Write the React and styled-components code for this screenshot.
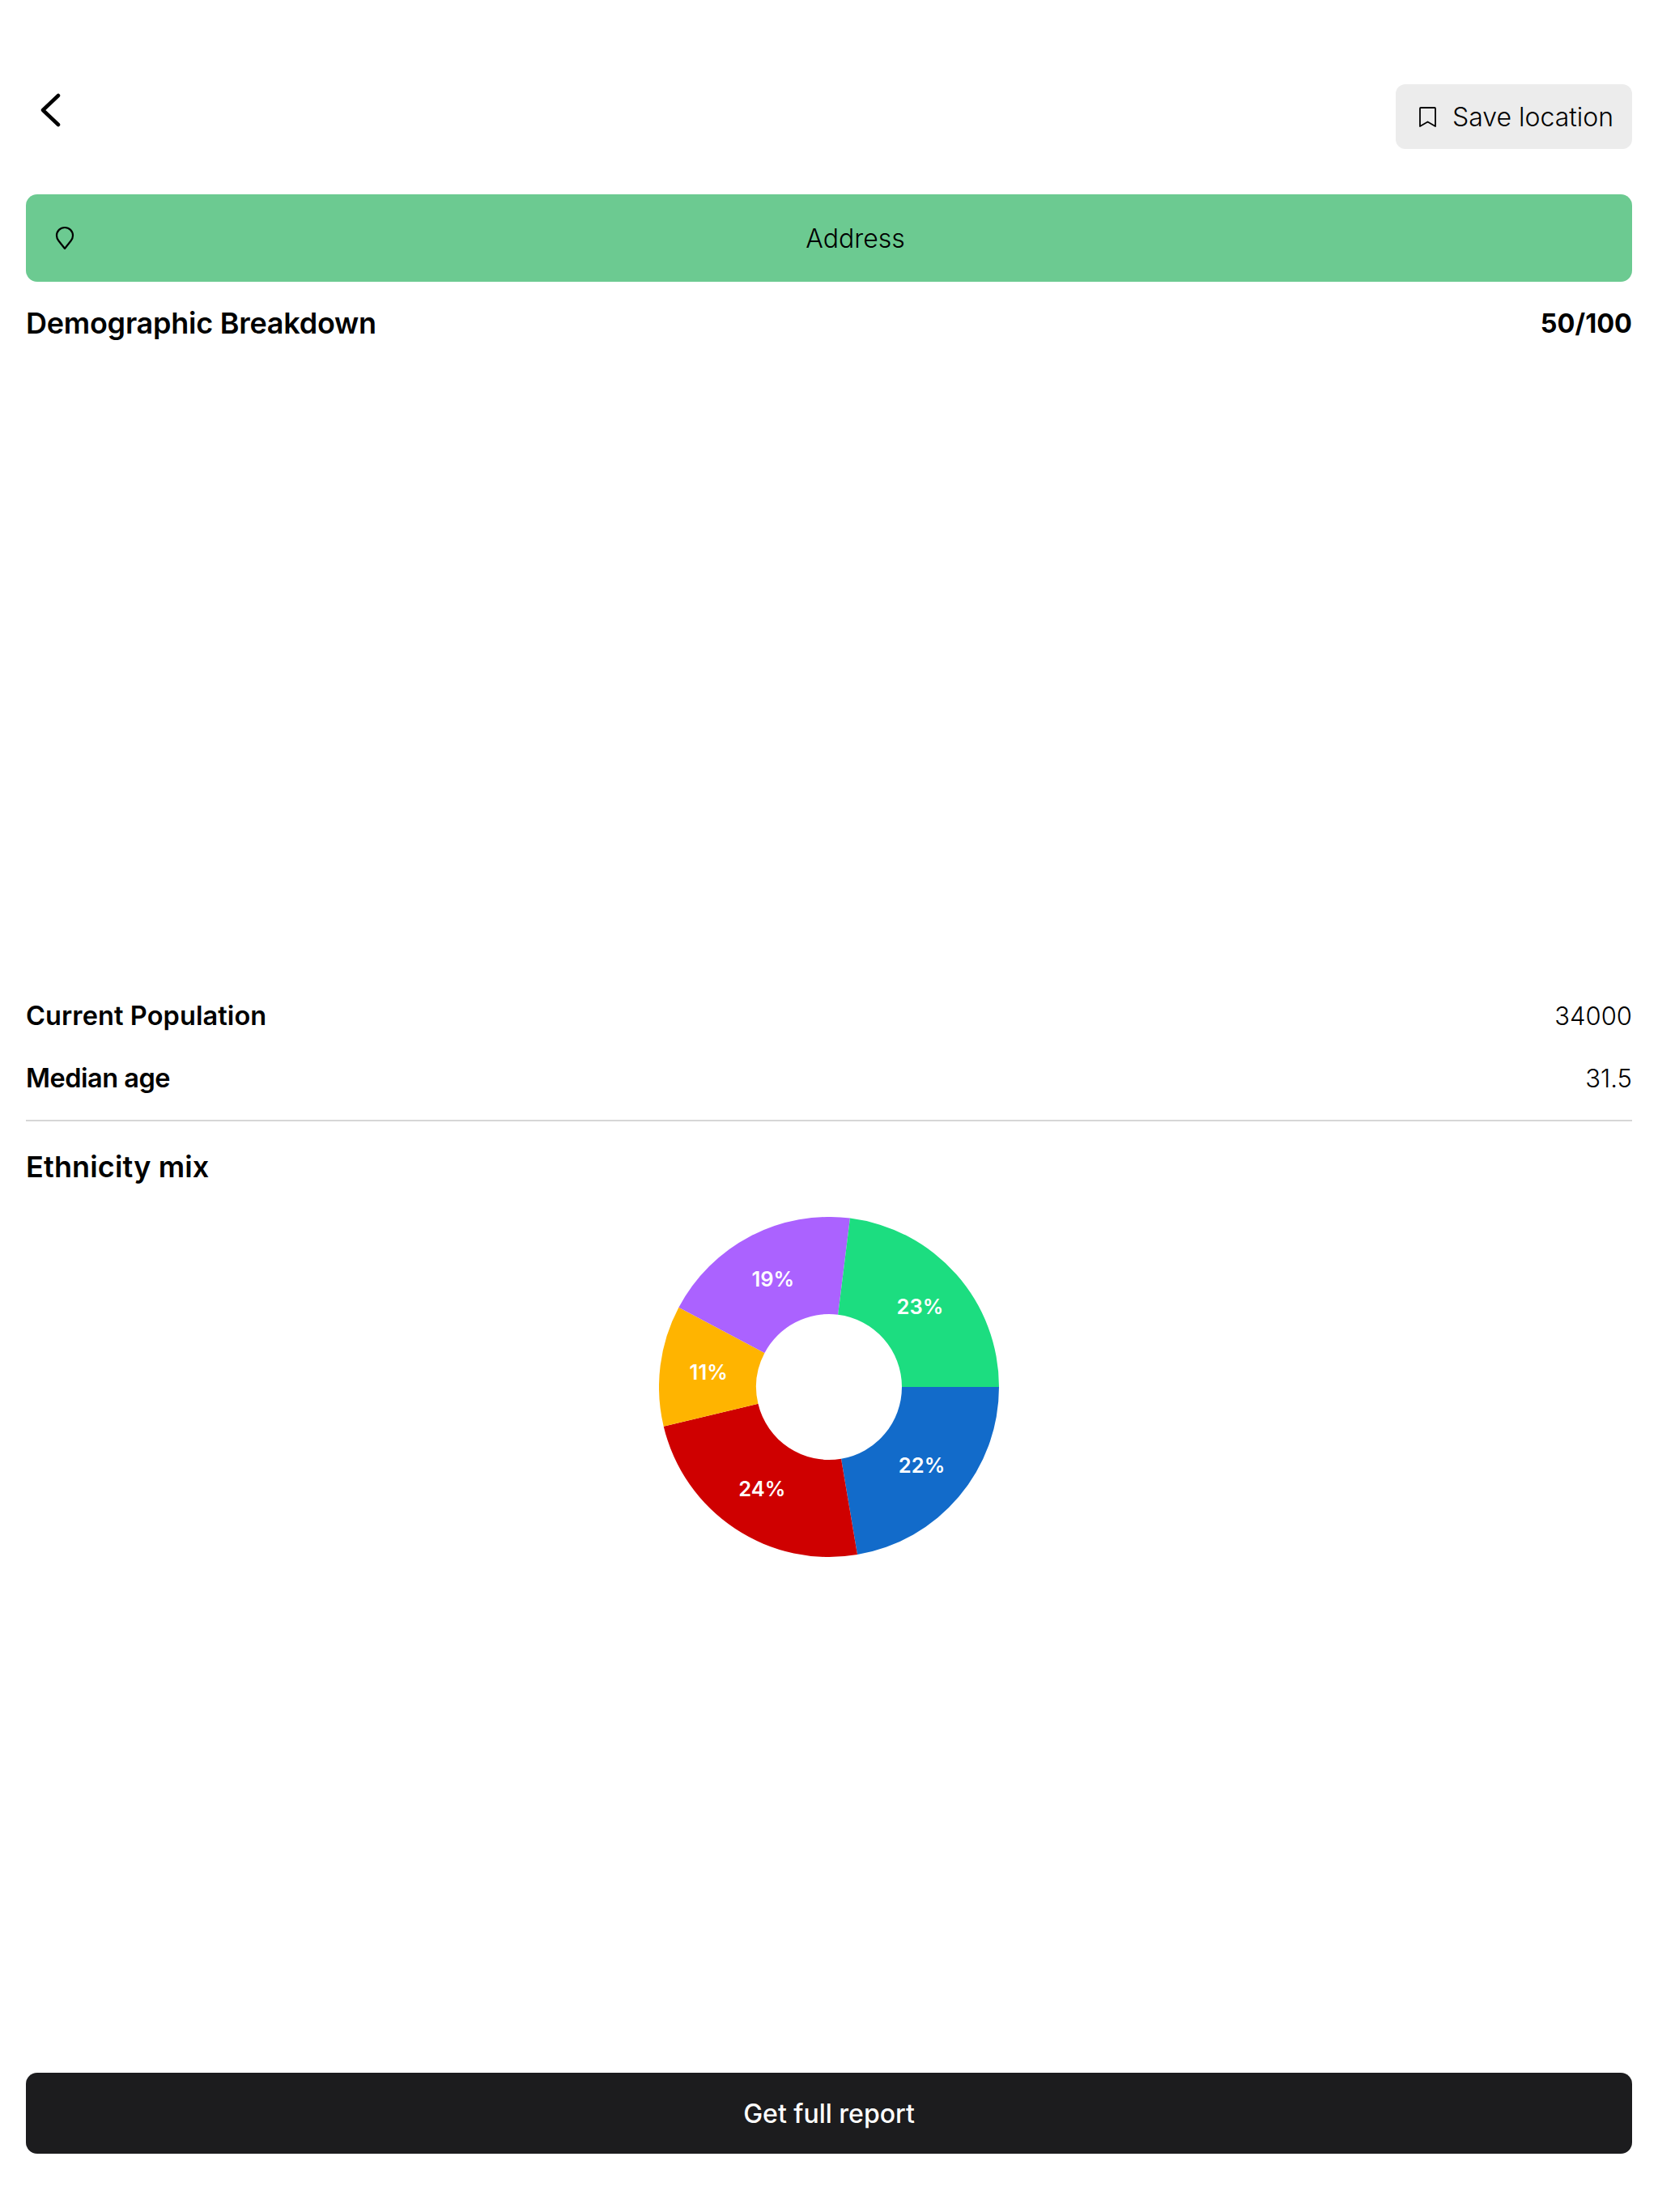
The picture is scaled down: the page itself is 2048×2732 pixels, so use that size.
import styled, { createGlobalStyle } from 'styled-components'

const Global = createGlobalStyle`
body{
  margin:0;
  background:#fff;
  font-family:Inter,"Noto Sans",sans-serif;
  color:#000;
}
`
const Page = styled.div`
  min-height:100vh;
  box-sizing:border-box;
  padding:104px 32px 72px;
  display:flex;
  flex-direction:column;
`
const Header = styled.header`
  display:flex;
  justify-content:space-between;
  align-items:flex-start;
`
const BackButton = styled.button`
  width:64px;
  height:64px;
  border:none;
  background:none;
  padding:0 0 0 17px;
  display:flex;
  align-items:center;
  cursor:pointer;
`
const SaveButton = styled.button`
  width:292px;
  height:80px;
  box-sizing:border-box;
  border:none;
  border-radius:12px;
  background:#ececec;
  display:flex;
  align-items:center;
  padding:0 0 0 28px;
  gap:19px;
  font:300 32px Inter,sans-serif;
  color:#000;
  cursor:pointer;
`
const AddressBar = styled.div`
  margin-top:56px;
  height:108px;
  box-sizing:border-box;
  border-radius:14px;
  background:#6cca91;
  display:flex;
  align-items:center;
  padding:0 0 0 36px;
  font-weight:300;
  font-size:32px;
`
const AddressText = styled.span`
  flex:1;
  text-align:center;
  padding-left:5px;
`
const SectionRow = styled.div`
  margin-top:${p => p.$top}px;
  height:52px;
  display:flex;
  justify-content:space-between;
  align-items:center;
`
const SectionTitle = styled.h2`
  margin:0;
  font-size:36px;
  font-weight:600;
  color:#000;
  letter-spacing:${p => p.$spacing}px;
`
const Score = styled.span`
  font-size:32.5px;
  font-weight:700;
`
const ChartSlot = styled.div`
  height:791px;
`
const StatRow = styled.div`
  height:77px;
  display:flex;
  justify-content:space-between;
  align-items:center;
`
const StatLabel = styled.span`
  font-size:32.5px;
  font-weight:600;
  letter-spacing:${p => p.$spacing}px;
`
const StatValue = styled.span`
  font-size:31px;
  font-weight:300;
`
const Divider = styled.hr`
  margin:13px 0 0;
  border:none;
  height:2px;
  background:#d6d6d6;
`
const DonutWrap = styled.div`
  margin-top:36px;
  display:flex;
  justify-content:center;
`
const SliceLabel = styled.text`
  fill:#fff;
  font-size:25.5px;
  font-weight:600;
  font-family:Inter,sans-serif;
  text-anchor:middle;
  dominant-baseline:central;
`
const ReportButton = styled.button`
  margin-top:auto;
  height:100px;
  border:none;
  border-radius:14px;
  background:#1c1c1e;
  color:#fff;
  font:500 32px Inter,sans-serif;
  cursor:pointer;
`

const slices = [
  { from: 0, to: 80.4, color: '#126bca', label: '22%' },
  { from: 80.4, to: 166.6, color: '#cf0000', label: '24%' },
  { from: 166.6, to: 207.9, color: '#ffb400', label: '11%' },
  { from: 207.9, to: 277.1, color: '#ab62ff', label: '19%' },
  { from: 277.1, to: 360, color: '#1cdd80', label: '23%' },
]

const point = (r, deg) => {
  const a = (deg * Math.PI) / 180
  return [210 + r * Math.cos(a), 210 + r * Math.sin(a)].map(n => n.toFixed(2)).join(' ')
}

const slicePath = (from, to) =>
  `M${point(90, from)} L${point(210, from)} A210 210 0 0 1 ${point(210, to)} L${point(90, to)} A90 90 0 0 0 ${point(90, from)} Z`

const Donut = () => (
  <svg width="420" height="420" viewBox="0 0 420 420">
    {slices.map(s => (
      <path key={s.label} d={slicePath(s.from, s.to)} fill={s.color} />
    ))}
    {slices.map(s => {
      const a = (((s.from + s.to) / 2) * Math.PI) / 180
      return (
        <SliceLabel key={s.label} x={210 + 150 * Math.cos(a)} y={210 + 150 * Math.sin(a)}>
          {s.label}
        </SliceLabel>
      )
    })}
  </svg>
)

const App = () => (
  <Page>
    <Global />
    <Header>
      <BackButton aria-label="Back">
        <svg width="26" height="42" viewBox="0 0 26 42" fill="none" stroke="#000" strokeWidth="4.5" strokeLinecap="round" strokeLinejoin="round">
          <path d="M23 3 L4 21 L23 39" />
        </svg>
      </BackButton>
      <SaveButton>
        <svg width="23" height="27" viewBox="0 0 23 27" fill="none" stroke="#000" strokeWidth="1.8" strokeLinejoin="round">
          <path d="M2 3 Q2 2 3 2 H20 Q21 2 21 3 V25 L11.5 19.5 L2 25 Z" />
        </svg>
        Save location
      </SaveButton>
    </Header>
    <AddressBar>
      <svg width="24" height="30" viewBox="0 0 24 30" fill="none" stroke="#000" strokeWidth="2.2" strokeLinejoin="round">
        <path d="M12 28 L4.5 18.5 C2.8 16.4 2 14.6 2 12 C2 6.4 6.4 2 12 2 C17.6 2 22 6.4 22 12 C22 14.6 21.2 16.4 19.5 18.5 Z" />
      </svg>
      <AddressText>Address</AddressText>
    </AddressBar>
    <SectionRow $top={25}>
      <SectionTitle $spacing={-0.25}>Demographic Breakdown</SectionTitle>
      <Score>50/100</Score>
    </SectionRow>
    <ChartSlot />
    <StatRow>
      <StatLabel $spacing={0.1}>Current Population</StatLabel>
      <StatValue>34000</StatValue>
    </StatRow>
    <StatRow>
      <StatLabel $spacing={-0.5}>Median age</StatLabel>
      <StatValue>31.5</StatValue>
    </StatRow>
    <Divider />
    <SectionRow $top={30}>
      <SectionTitle $spacing={0.15}>Ethnicity mix</SectionTitle>
    </SectionRow>
    <DonutWrap>
      <Donut />
    </DonutWrap>
    <ReportButton>Get full report</ReportButton>
  </Page>
)

export default App
